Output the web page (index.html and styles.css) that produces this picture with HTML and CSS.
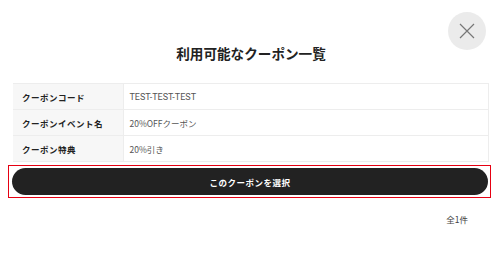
FILE: index.html
```html
<!DOCTYPE html>
<html lang="ja">
<head>
    <meta charset="UTF-8">
    <meta name="viewport" content="width=device-width, initial-scale=1.0">
    <title>利用可能なクーポン一覧</title>
    <link rel="stylesheet" href="styles.css">
</head>
<body>
    <div class="modal">
        <button class="close" aria-label="閉じる">
            <svg width="16" height="16" viewBox="0 0 16 16">
                <path d="M1 1 L15 15 M15 1 L1 15" stroke="#777" stroke-width="1.2" fill="none" />
            </svg>
        </button>

        <h1 class="title">利用可能なクーポン一覧</h1>

        <table class="coupon-table">
            <tr>
                <th>クーポンコード</th>
                <td class="code">TEST-TEST-TEST</td>
            </tr>
            <tr>
                <th>クーポンイベント名</th>
                <td>20%OFFクーポン</td>
            </tr>
            <tr>
                <th>クーポン特典</th>
                <td>20%引き</td>
            </tr>
        </table>

        <div class="select-wrap">
            <button class="select-btn">このクーポンを選択</button>
        </div>

        <div class="count">全1件</div>
    </div>
</body>
</html>
```

FILE: styles.css
```css
* { margin: 0; padding: 0; box-sizing: border-box; }
body {
    font-family: "Noto Sans CJK JP", "Noto Sans", sans-serif;
    background: #fff;
    color: #222;
}
.modal {
    position: relative;
    width: 500px;
    height: 277px;
    padding: 43px 11px 0 13px;
}
.close {
    position: absolute;
    top: 12px;
    right: 14px;
    width: 38px;
    height: 38px;
    border-radius: 50%;
    border: none;
    background: #ebebeb;
    display: flex;
    align-items: center;
    justify-content: center;
}
.title {
    text-align: center;
    font-size: 13.6px;
    font-weight: bold;
    line-height: 20px;
    color: #222;
    margin-bottom: 20px;
}
.coupon-table {
    width: 476px;
    border-collapse: collapse;
    font-size: 8.5px;
}
.coupon-table th,
.coupon-table td {
    height: 26px;
    border: 1px solid #ededed;
    text-align: left;
    vertical-align: middle;
}
.coupon-table th {
    width: 110px;
    background: #f7f7f7;
    font-weight: bold;
    padding-left: 9px;
    letter-spacing: 0.5px;
    color: #222;
    border-left: none;
}
.coupon-table td {
    padding-left: 6px;
    color: #555;
}
.coupon-table td.code {
    font-family: Roboto, "Noto Sans CJK JP", sans-serif;
    font-size: 9px;
    color: #555;
}
.select-wrap {
    width: 483px;
    margin: 3px 0 0 -5px;
    border: 1px solid #e60012;
    padding: 2px 2px 2px 3px;
}
.select-btn {
    display: block;
    width: 476px;
    height: 27px;
    border: none;
    border-radius: 14px;
    background: #222;
    color: #fff;
    font-family: "Noto Sans CJK JP", sans-serif;
    font-size: 8.5px;
    font-weight: bold;
    letter-spacing: 0.5px;
}
.count {
    text-align: right;
    padding-right: 21px;
    margin-top: 15px;
    font-size: 8.5px;
    color: #444;
}
```
